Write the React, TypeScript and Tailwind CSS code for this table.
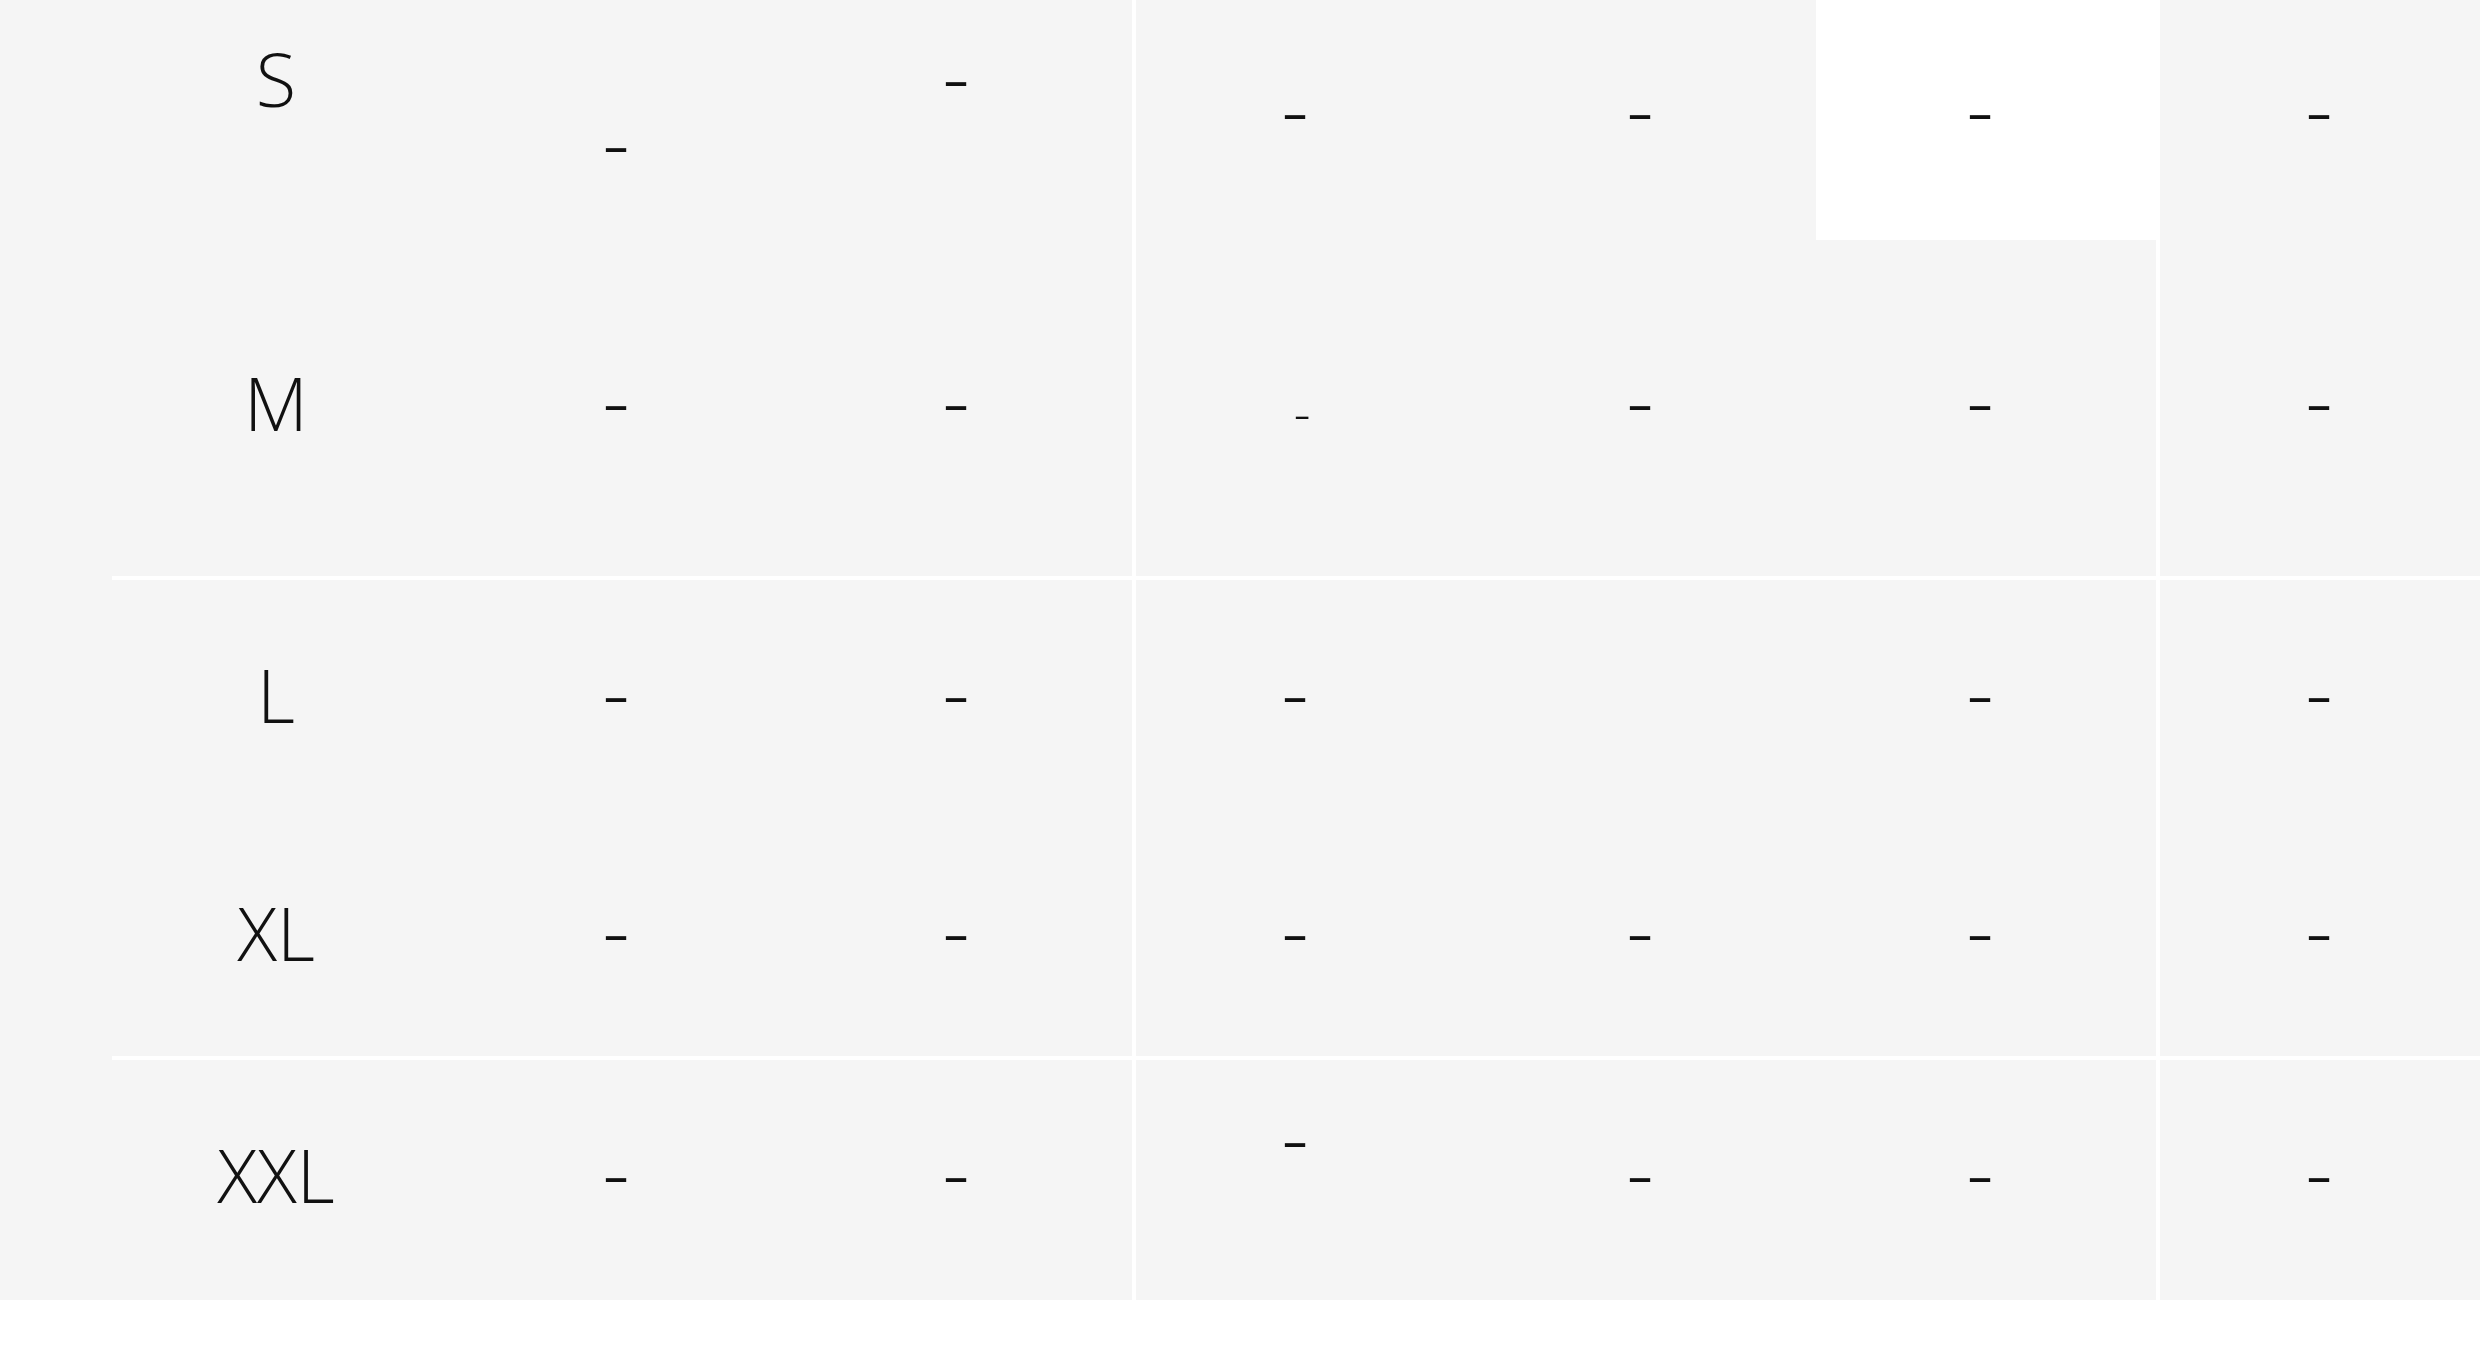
import React from 'react';

type Cell = { text: string; cls?: string; bg?: string; pr?: string };
type Row = { label: string; labelCls?: string; h: string; cells: Cell[]; pad?: string };

const DASH = 'text-[84px] -translate-y-[9px]';

// one size per row: label + six values (three per column group, last group cut off)
const rows: Row[] = [
  {
    label: 'S',
    labelCls: '-translate-y-[38px]',
    h: 'h-[240px]',
    pad: 'pb-[6px]',
    cells: [
      { text: '-', cls: 'text-[84px] translate-y-[24px]' },
      { text: '-', cls: 'text-[84px] -translate-y-[42px]' },
      { text: '-', pr: 'pr-[22px]' },
      { text: '-' },
      { text: '-', bg: 'bg-white' },
      { text: '-', pr: 'pr-[22px]' },
    ],
  },
  {
    label: 'M',
    h: 'h-[336px]',
    cells: [
      { text: '-' },
      { text: '-' },
      { text: '-', cls: 'text-[52px] translate-y-[4px]', pr: 'pr-[8px]' },
      { text: '-' },
      { text: '-' },
      { text: '-', pr: 'pr-[22px]' },
    ],
  },
  {
    label: 'L',
    h: 'h-[240px]',
    cells: [
      { text: '-' },
      { text: '-' },
      { text: '-', pr: 'pr-[22px]' },
      { text: '' },
      { text: '-' },
      { text: '-', pr: 'pr-[22px]' },
    ],
  },
  {
    label: 'XL',
    h: 'h-[236px]',
    cells: [
      { text: '-' },
      { text: '-' },
      { text: '-', pr: 'pr-[22px]' },
      { text: '-' },
      { text: '-' },
      { text: '-', pr: 'pr-[22px]' },
    ],
  },
  {
    label: 'XXL',
    h: 'h-[240px]',
    cells: [
      { text: '-' },
      { text: '-' },
      { text: '-', cls: 'text-[84px] -translate-y-[44px]', pr: 'pr-[22px]' },
      { text: '-' },
      { text: '-' },
      { text: '-', pr: 'pr-[22px]' },
    ],
  },
];

// rows are grouped between the white rules: S+M, L+XL, XXL
const rowGroups = [rows.slice(0, 2), rows.slice(2, 4), rows.slice(4)];

function Value({ cell, h, pad }: { cell: Cell; h: string; pad?: string }) {
  return (
    <div
      className={`w-[340px] ${h} flex items-center justify-center ${cell.pr ?? 'pr-3'} ${pad ?? ''} ${cell.bg ?? 'bg-[#f5f5f5]'}`}
    >
      <span className={`inline-block leading-none ${cell.cls ?? DASH}`}>{cell.text}</span>
    </div>
  );
}

export default function App() {
  return (
    <div className="w-[2480px] h-[1352px] bg-white overflow-hidden">
      <div
        className="flex h-[1300px] bg-[#f5f5f5] text-[#111111] text-[74px] font-[350]"
        style={{ fontFamily: '"Open Sans", "Noto Sans", sans-serif' }}
      >
        <div className="w-[112px] shrink-0" />
        <div className="flex flex-col gap-[4px] bg-white shrink-0">
          {rowGroups.map((group, gi) => (
            <div key={gi} className="flex gap-[4px]">
              {/* first block: label + 2 values */}
              <div className="flex flex-col bg-[#f5f5f5]">
                {group.map((r) => (
                  <div key={r.label} className="flex">
                    <div className={`w-[340px] ${r.h} flex items-center justify-center pr-3 ${r.pad ?? ''}`}>
                      <span className={`inline-block leading-none ${r.labelCls ?? '-translate-y-[5px]'}`}>{r.label}</span>
                    </div>
                    <Value cell={r.cells[0]} h={r.h} pad={r.pad} />
                    <Value cell={r.cells[1]} h={r.h} pad={r.pad} />
                  </div>
                ))}
              </div>
              {/* second block */}
              <div className="flex flex-col bg-[#f5f5f5]">
                {group.map((r) => (
                  <div key={r.label} className="flex">
                    <Value cell={r.cells[2]} h={r.h} pad={r.pad} />
                    <Value cell={r.cells[3]} h={r.h} pad={r.pad} />
                    <Value cell={r.cells[4]} h={r.h} pad={r.pad} />
                  </div>
                ))}
              </div>
              {/* third block, cut by the window edge */}
              <div className="flex flex-col bg-[#f5f5f5]">
                {group.map((r) => (
                  <div key={r.label} className="flex">
                    <Value cell={r.cells[5]} h={r.h} pad={r.pad} />
                  </div>
                ))}
              </div>
            </div>
          ))}
        </div>
      </div>
    </div>
  );
}
